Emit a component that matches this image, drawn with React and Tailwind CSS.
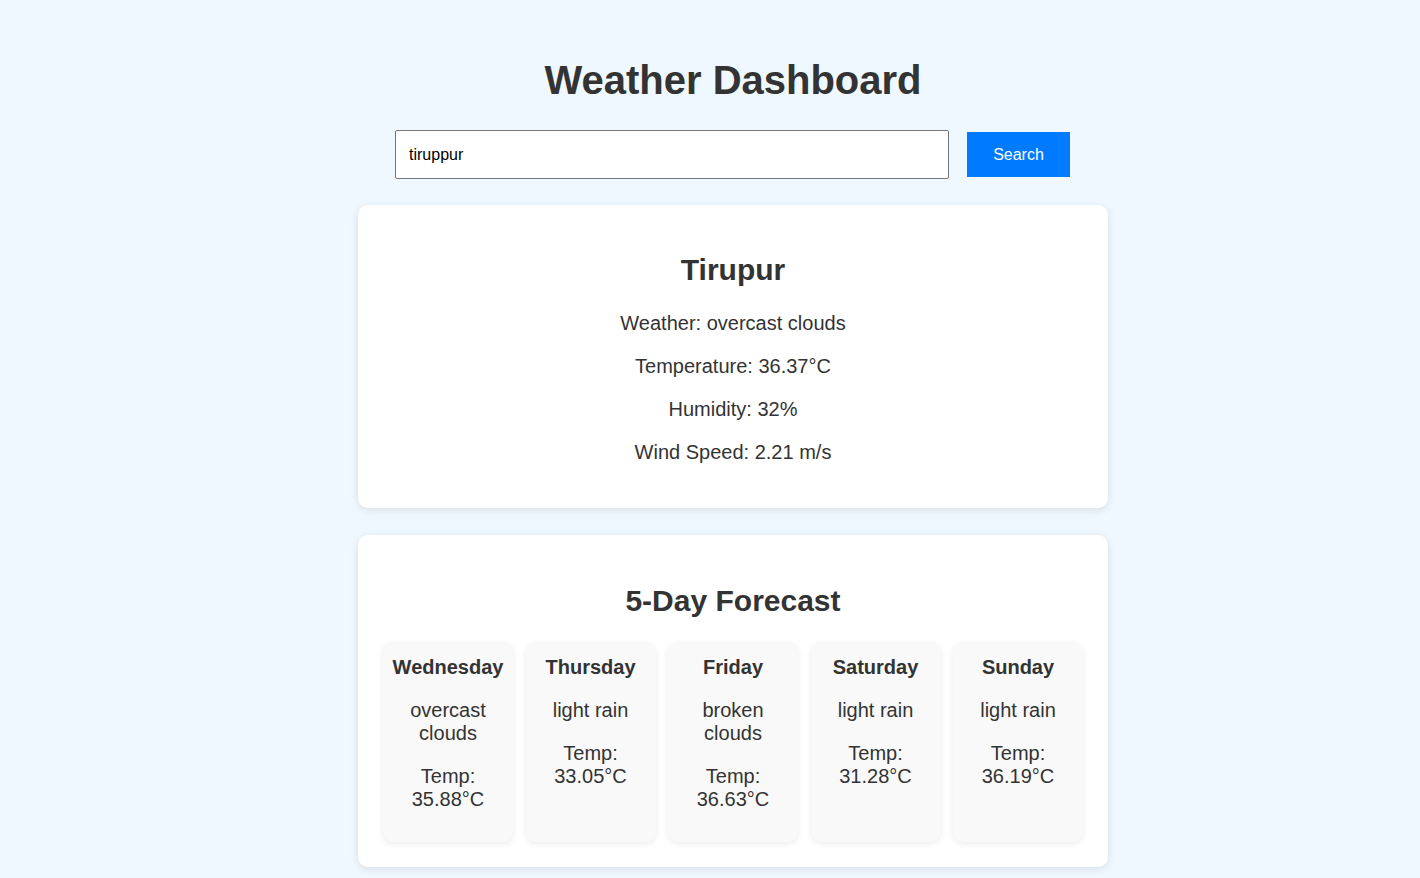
import React from "react";

const forecast = [
  { day: "Wednesday", desc: "overcast clouds", temp: "35.88°C" },
  { day: "Thursday", desc: "light rain", temp: "33.05°C" },
  { day: "Friday", desc: "broken clouds", temp: "36.63°C" },
  { day: "Saturday", desc: "light rain", temp: "31.28°C" },
  { day: "Sunday", desc: "light rain", temp: "36.19°C" },
];

export default function App() {
  return (
    <div
      className="min-h-[878px] w-full bg-[#f0f8ff] text-[#333] pl-[46px] pt-[57px] pb-[40px] flex flex-col items-center"
      style={{ fontFamily: '"Liberation Sans", Arial, sans-serif' }}
    >
      <h1 className="text-[40px] leading-[46px] font-bold">Weather Dashboard</h1>

      <div className="mt-[27px] pr-[1px] flex items-center gap-[18px]">
        <input
          type="text"
          defaultValue="tiruppur"
          className="w-[554px] h-[49px] border border-[#767676] rounded-[2px] bg-white pl-[13px] text-[16px] text-black outline-none"
          style={{ fontFamily: '"Liberation Sans", Arial, sans-serif' }}
        />
        <button className="w-[103px] h-[45px] bg-[#007bff] text-white text-[16px]">
          Search
        </button>
      </div>

      <div className="mt-[26px] w-[750px] bg-white rounded-[10px] shadow-[0_2px_8px_rgba(0,0,0,0.1)] pt-[47px] pb-[44px] flex flex-col items-center text-center">
        <h2 className="text-[30px] leading-[35px] font-bold">Tirupur</h2>
        <p className="mt-[25px] text-[20px] leading-[23px]">Weather: overcast clouds</p>
        <p className="mt-[20px] text-[20px] leading-[23px]">Temperature: 36.37°C</p>
        <p className="mt-[20px] text-[20px] leading-[23px]">Humidity: 32%</p>
        <p className="mt-[20px] text-[20px] leading-[23px]">Wind Speed: 2.21 m/s</p>
      </div>

      <div className="mt-[27px] w-[750px] bg-white rounded-[10px] shadow-[0_2px_8px_rgba(0,0,0,0.1)] pt-[48px] pb-[25px] px-[25px] flex flex-col items-center text-center">
        <h2 className="text-[30px] leading-[35px] font-bold">5-Day Forecast</h2>
        <div className="mt-[24px] w-full flex justify-between items-stretch">
          {forecast.map((f) => (
            <div
              key={f.day}
              className="w-[130px] bg-[#f9f9f9] rounded-[10px] shadow-[0_2px_6px_rgba(0,0,0,0.08)] pt-[14px] pb-[31px] px-[5px] text-[20px] leading-[23px]"
            >
              <p className="font-bold">{f.day}</p>
              <p className="mt-[20px]">{f.desc}</p>
              <p className="mt-[20px]">Temp: {f.temp}</p>
            </div>
          ))}
        </div>
      </div>
    </div>
  );
}
